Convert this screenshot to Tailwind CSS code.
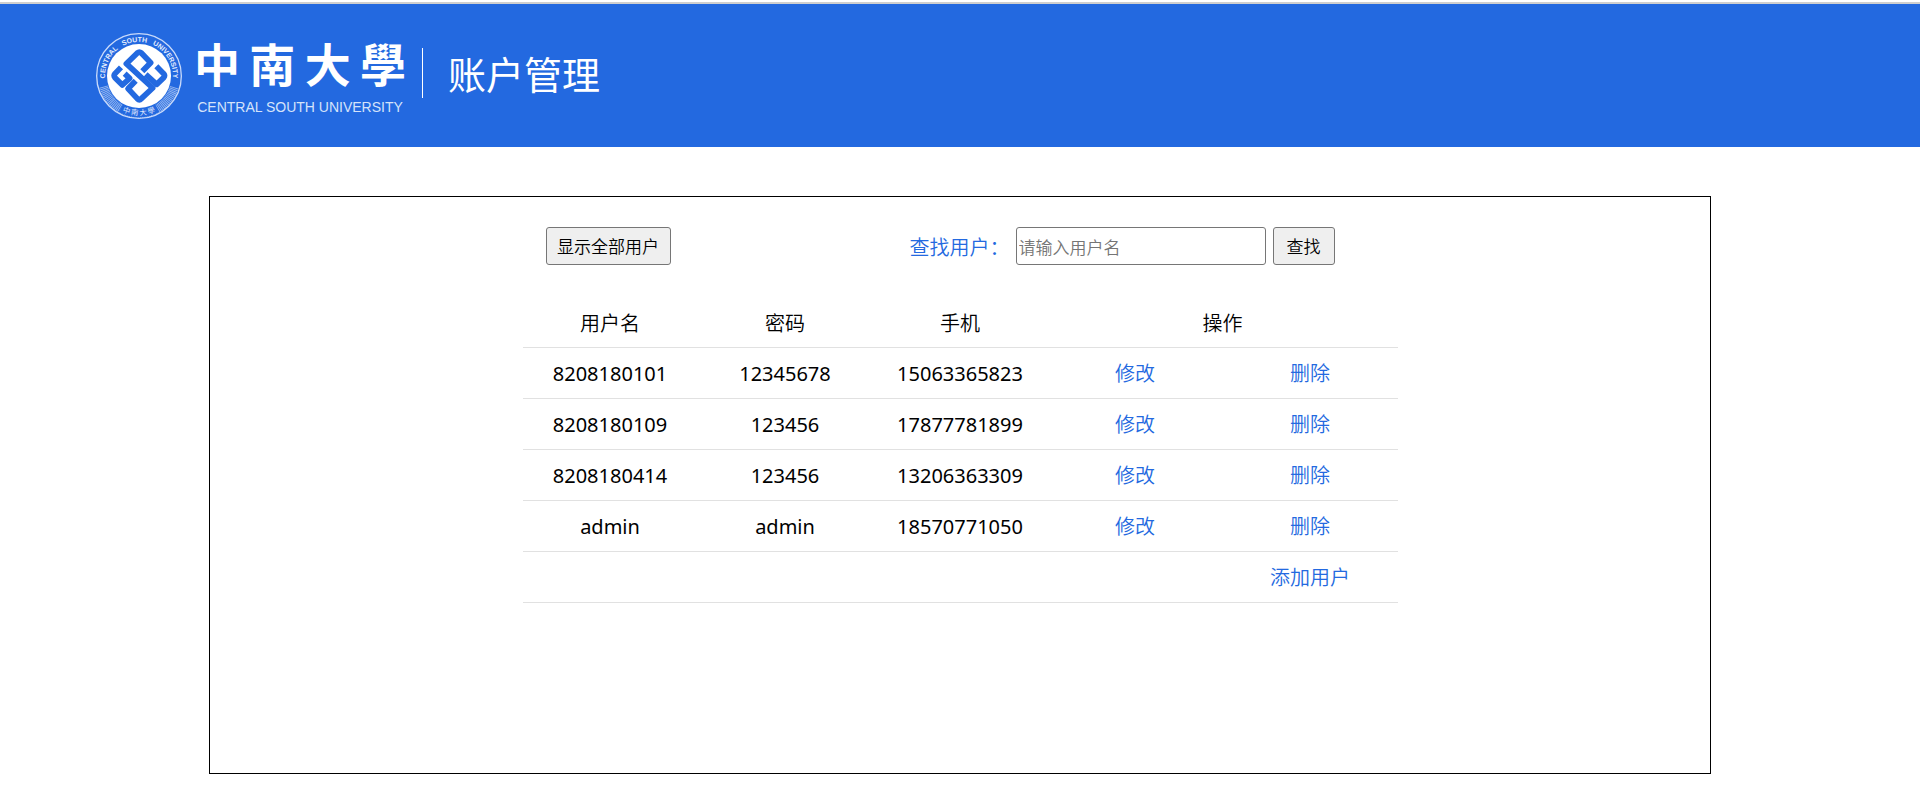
<!DOCTYPE html>
<html lang="zh-CN">
<head>
<meta charset="utf-8">
<meta name="viewport" content="width=device-width, initial-scale=1">
<title>账户管理</title>
<script src="https://cdn.jsdelivr.net/npm/@tailwindcss/browser@4"></script>
</head>
<body class="bg-white text-black text-[20px] leading-[30px] font-['Noto_Sans','Noto_Sans_CJK_SC',sans-serif]">
<header class="bg-[#2369e0] border-t-2 border-[#cfcfcf] mt-[2px] flex items-start pt-7 pb-[25px] pl-[95px] text-white">
  <div class="flex items-start gap-[11px]" role="img" aria-label="中南大学">
    <svg class="size-[88px] shrink-0" viewBox="45 36 264 264" fill="none">
      <defs>
        <path id="arc" d="M92 224A102 102 0 1 1 262 224"/>
        <path id="base" d="M110 265A118 118 0 0 0 244 265"/>
      </defs>
      <circle cx="177" cy="168" r="127" stroke="#c9dafa" stroke-width="4"/>
      <path d="M71 200A110 110 0 0 0 283 200" stroke="#fff" stroke-opacity=".5" stroke-width="26" stroke-dasharray="3 2"/>
      <path d="M123 264A110 110 0 0 0 231 264" stroke="#2369e0" stroke-width="27"/>
      <circle cx="177" cy="168" r="96" fill="#fff"/>
      <g transform="translate(83 74)" stroke="#2369e0" stroke-width="17" stroke-linejoin="round">
        <path d="M104 80L129 54L101 25Q95 20 89 25L56 57L135 130L101 162Q95 168 89 162L61 132L84 108"/>
        <path d="M40 68L22 87Q17 93 22 99L44 121L66 101L51 87"/>
        <path d="M146 65L168 87Q173 93 168 99L147 119L114 89"/>
      </g>
      <text fill="#e3ecfd" font-size="21" font-weight="700" font-family="Liberation Sans"><textPath href="#arc" startOffset="50%" text-anchor="middle" xml:space="preserve">CENTRAL   SOUTH   UNIVERSITY</textPath></text>
      <text fill="#e3ecfd" font-size="22" font-family="Noto Sans CJK TC"><textPath href="#base" startOffset="50%" text-anchor="middle">中 南 大 學</textPath></text>
    </svg>
    <div class="flex flex-col items-center w-[212px]">
      <div class="flex w-full justify-between font-bold text-[46px] leading-[60px] font-['Noto_Sans_CJK_TC',sans-serif]"><span>中</span><span>南</span><span>大</span><span>學</span></div>
      <div class="text-[14px] leading-[30px] text-[#d5e3fa] font-['Liberation_Sans',sans-serif]">CENTRAL SOUTH UNIVERSITY</div>
    </div>
  </div>
  <div class="w-px h-[50px] bg-white mt-4 ml-4"></div>
  <h1 class="ml-[25px] mt-4 text-[38px] leading-[50px] font-['Noto_Sans_CJK_SC',sans-serif]">账户管理</h1>
</header>
<main class="mx-[209px] mt-[49px] mb-[38px] min-h-[578px] border border-black pt-[30px]">
  <div class="w-[875px] mx-auto">
    <div class="flex items-center justify-between pl-[23px] pr-[63px] mb-[31px]">
      <button type="button" class="w-[125px] h-[38px] border border-[#767676] rounded-[3px] bg-[#efefef] text-[17px] font-[350] font-['Noto_Sans_CJK_SC',sans-serif]">显示全部用户</button>
      <form class="flex items-center">
        <label for="q" class="pt-[2px] text-[#2369e0] font-[350] font-['Noto_Sans_CJK_SC',sans-serif]">查找用户：</label>
        <input id="q" type="text" placeholder="请输入用户名" class="ml-[6px] w-[250px] h-[38px] border border-[#767676] rounded-[3px] px-[2px] text-[17px] font-[350] font-['Noto_Sans_CJK_SC',sans-serif] placeholder:text-[#757575]">
        <button type="button" class="ml-[7px] w-[62px] h-[38px] border border-[#767676] rounded-[3px] bg-[#efefef] text-[17px] font-[350] font-['Noto_Sans_CJK_SC',sans-serif]">查找</button>
      </form>
    </div>
    <table class="w-full table-fixed border-collapse text-center [&_tr]:border-b [&_tr]:border-[#e1e1e1] [&_td]:h-[51px] [&_td]:pt-[2px] [&_th]:h-[51px] [&_th]:pt-[3px] [&_th]:font-[350] [&_th]:font-['Noto_Sans_CJK_SC',sans-serif] [&_a]:font-[350] [&_a]:font-['Noto_Sans_CJK_SC',sans-serif] [&_a]:text-[#2369e0]">
      <thead><tr><th>用户名</th><th>密码</th><th>手机</th><th colspan="2">操作</th></tr></thead>
      <tbody>
        <tr><td>8208180101</td><td>12345678</td><td>15063365823</td><td><a href="#">修改</a></td><td><a href="#">删除</a></td></tr>
        <tr><td>8208180109</td><td>123456</td><td>17877781899</td><td><a href="#">修改</a></td><td><a href="#">删除</a></td></tr>
        <tr><td>8208180414</td><td>123456</td><td>13206363309</td><td><a href="#">修改</a></td><td><a href="#">删除</a></td></tr>
        <tr><td>admin</td><td>admin</td><td>18570771050</td><td><a href="#">修改</a></td><td><a href="#">删除</a></td></tr>
        <tr><td></td><td></td><td></td><td></td><td><a href="#">添加用户</a></td></tr>
      </tbody>
    </table>
  </div>
</main>
</body>
</html>
